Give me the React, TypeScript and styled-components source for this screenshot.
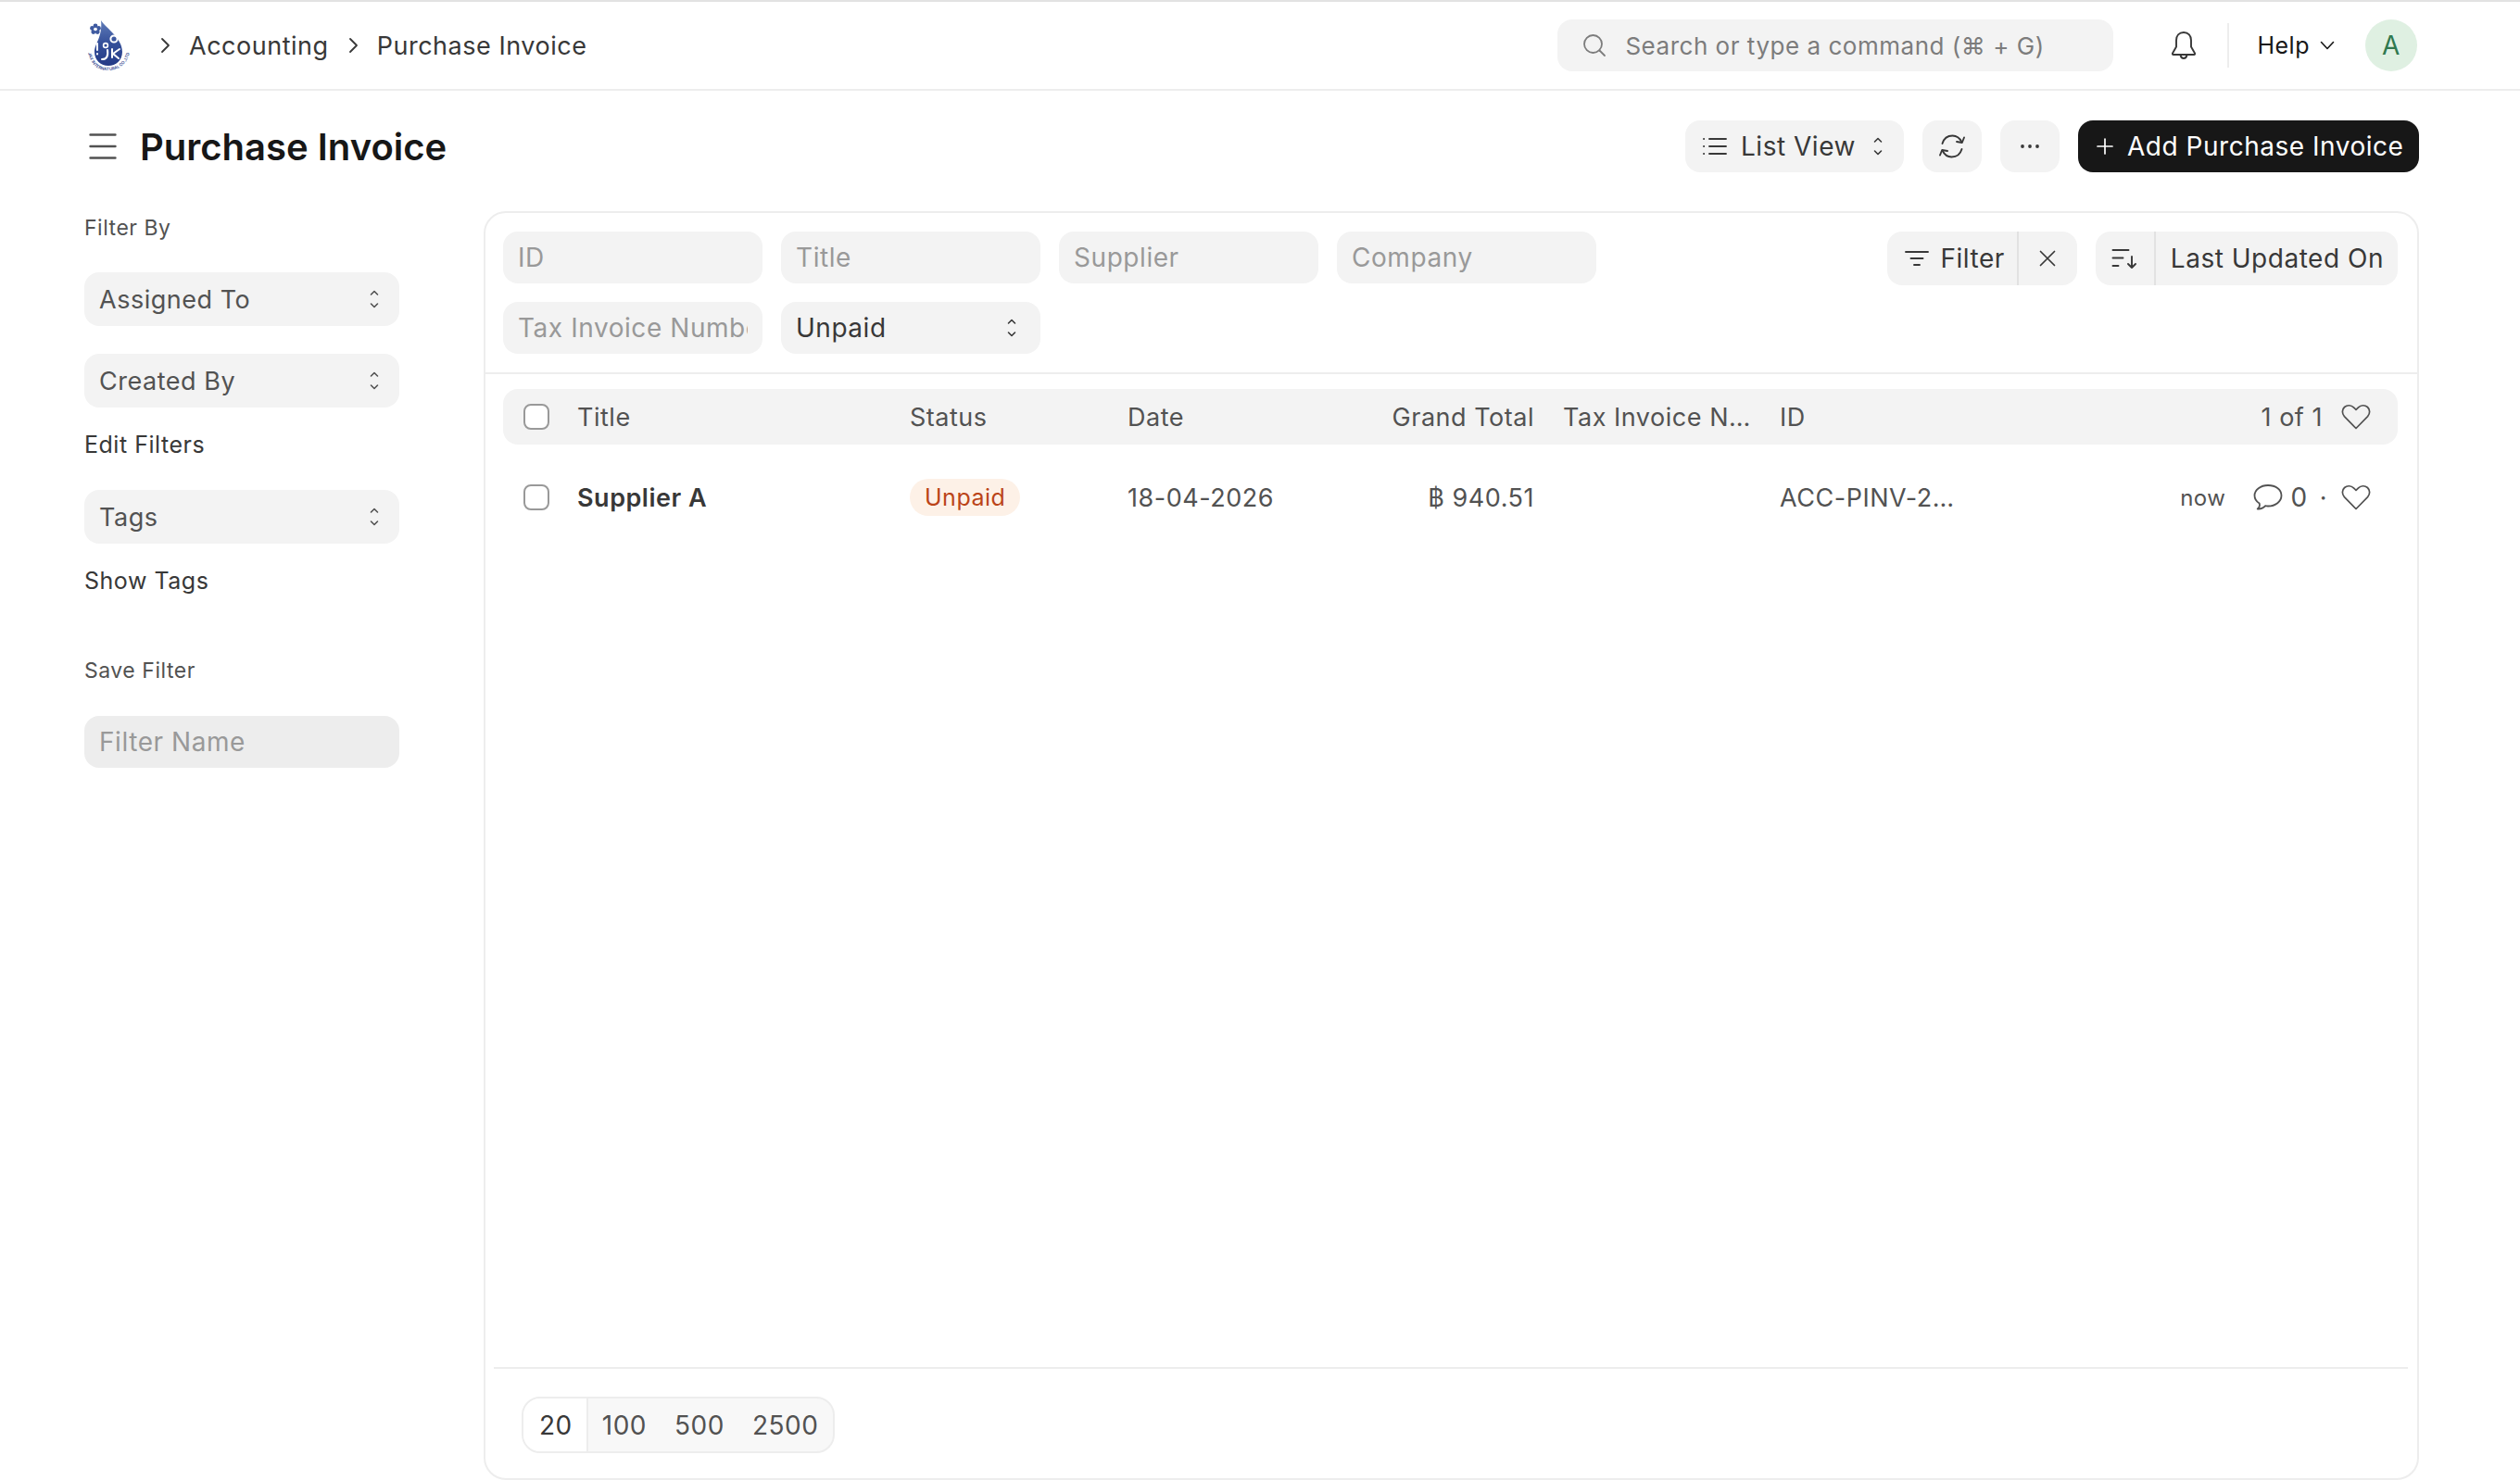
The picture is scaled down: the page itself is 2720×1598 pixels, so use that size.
import styled, { createGlobalStyle } from "styled-components"

const GlobalStyle = createGlobalStyle`
  html, body {
    margin: 0;
    background: #fff;
    font-family: Inter, "Noto Sans", sans-serif;
    font-size: 26px;
    letter-spacing: 0.02em;
    color: #383838;
  }
  * {
    box-sizing: border-box;
  }
`

const Icon = styled.svg`
  display: block;
  flex: none;
  fill: none;
  stroke: currentColor;
  stroke-linecap: round;
  stroke-linejoin: round;
`

function SelectIcon() {
  return (
    <Icon width="10" height="20" viewBox="0 0 10 20" strokeWidth="1.6">
      <path d="M1.5 5 5 1.5 8.5 5M1.5 15 5 18.5 8.5 15" />
    </Icon>
  )
}

function Chevron() {
  return (
    <Icon width="11" height="20" viewBox="0 0 11 20" strokeWidth="1.8">
      <path d="M2 3l7 7-7 7" />
    </Icon>
  )
}

function HeartIcon() {
  return (
    <Icon width="32" height="28" viewBox="0 0 32 28" strokeWidth="1.7">
      <path d="M16 26.5 3.4 13.6C.6 10.6.8 6 3.6 3.500 6.400 1 10.800 1.200 13.400 3.800L16 6.400l2.600-2.600c2.600-2.600 7-2.800 9.800-.3 2.800 2.500 3 7.100.2 10.100L16 26.500Z" />
    </Icon>
  )
}

function Logo() {
  return (
    <LogoSvg width="50" height="58" viewBox="0 0 50 58">
      <defs>
        <linearGradient id="drop" x1="0" y1="0" x2="0" y2="1">
          <stop offset="0" stopColor="#5f7cb8" />
          <stop offset="0.5" stopColor="#35509a" />
          <stop offset="1" stopColor="#243a86" />
        </linearGradient>
        <path id="ring" d="M3 37C7 52 14 56 25 56 36 56 44 50 48 37" />
      </defs>
      <path
        fill="url(#drop)"
        d="M17 2C23 11 40 21 40 36 40 45 33 51 25 51 17 51 10 45 10 36 10 27 19 20 17 2Z"
      />
      <g fill="#3e5aa0">
        <circle cx="11" cy="8" r="2.400" />
        <circle cx="7.500" cy="10.500" r="2.400" />
        <circle cx="14.500" cy="10.500" r="2.400" />
        <circle cx="8.800" cy="14.500" r="2.400" />
        <circle cx="13.200" cy="14.500" r="2.400" />
      </g>
      <circle cx="11" cy="11.500" r="1.800" fill="#fff" />
      <circle cx="31" cy="22" r="3.600" fill="none" stroke="#fff" strokeWidth="2" />
      <circle cx="22" cy="29" r="2.400" fill="none" stroke="#fff" strokeWidth="1.600" />
      <g fill="none" stroke="#fff" strokeWidth="2" strokeLinecap="round">
        <path d="M13 27v7M13 38v.5" />
        <path d="M24 34c1 7-1 10-6 10" />
        <path d="M29 33v9M37 33l-7 5 6 5" />
      </g>
      <LogoText>
        <textPath href="#ring" startOffset="0">JAX INTERNATURAL CO.,LTD</textPath>
      </LogoText>
    </LogoSvg>
  )
}

export default function App() {
  return (
    <Page>
      <GlobalStyle />
      <Navbar>
        <Logo />
        <Crumbs>
          <Chevron />
          <Crumb>Accounting</Crumb>
          <Chevron />
          <Crumb>Purchase Invoice</Crumb>
        </Crumbs>
        <SearchBox>
          <Icon width="26" height="26" viewBox="0 0 26 26" strokeWidth="1.800">
            <circle cx="11.500" cy="11.500" r="9.500" />
            <path d="M18.500 18.500 24 24" />
          </Icon>
          Search or type a command (⌘ + G)
        </SearchBox>
        <BellButton>
          <Icon width="30" height="32" viewBox="0 0 30 32" strokeWidth="1.900">
            <path d="M15 2c-5 0-8 3.500-8 8.500v7L3 24.500c-.4.700 0 1.500.9 1.500h22.200c.9 0 1.300-.8.900-1.500l-4-7v-7C23 5.500 20 2 15 2Z" />
            <path d="M11.500 26.500c.4 2.200 1.700 3.500 3.500 3.500s3.100-1.300 3.500-3.500" />
          </Icon>
        </BellButton>
        <NavDivider />
        <HelpMenu>
          Help
          <Icon width="16" height="10" viewBox="0 0 16 10" strokeWidth="1.600">
            <path d="M1.500 1.500 8 8.500l6.500-7" />
          </Icon>
        </HelpMenu>
        <Avatar>A</Avatar>
      </Navbar>

      <Main>
        <PageHead>
          <Icon width="30" height="28" viewBox="0 0 30 28" strokeWidth="2.400">
            <path d="M1.500 1.500h27M1.500 14h27M1.500 26.500h27" />
          </Icon>
          <PageTitle>Purchase Invoice</PageTitle>
          <HeadActions>
            <ViewButton>
              <Icon width="26" height="20" viewBox="0 0 26 20" strokeWidth="1.900">
                <path d="M7 2h18M7 10h18M7 18h18M1 2h.2M1 10h.2M1 18h.2" />
              </Icon>
              <span>List View</span>
              <SelectIcon />
            </ViewButton>
            <IconButton>
              <Icon width="30" height="28" viewBox="0 0 30 28" strokeWidth="1.900">
                <path d="M4.500 11C6 6 10 2.500 15.500 2.500c5 0 8 3 10 7" />
                <path d="M28 4.500 25.800 10l-5.800-1" />
                <path d="M25.500 17c-1.500 5-5.500 8.500-11 8.500-5 0-8-3-10-7" />
                <path d="M2 23.500l2.200-5.500 5.800 1" />
              </Icon>
            </IconButton>
            <IconButton>
              <Icon width="22" height="6" viewBox="0 0 22 6" strokeWidth="0">
                <circle cx="3" cy="3" r="1.900" fill="currentColor" />
                <circle cx="11" cy="3" r="1.900" fill="currentColor" />
                <circle cx="19" cy="3" r="1.900" fill="currentColor" />
              </Icon>
            </IconButton>
            <PrimaryButton>
              <Icon width="18" height="18" viewBox="0 0 18 18" strokeWidth="1.700">
                <path d="M9 1v16M1 9h16" />
              </Icon>
              Add Purchase Invoice
            </PrimaryButton>
          </HeadActions>
        </PageHead>

        <Body>
          <Sidebar>
            <SideLabel>Filter By</SideLabel>
            <SideSelect $gap>
              Assigned To
              <SelectIcon />
            </SideSelect>
            <SideSelect $gap>
              Created By
              <SelectIcon />
            </SideSelect>
            <SideLink>Edit Filters</SideLink>
            <SideSelect>
              Tags
              <SelectIcon />
            </SideSelect>
            <SideLink>Show Tags</SideLink>
            <SaveLabel>Save Filter</SaveLabel>
            <FilterName placeholder="Filter Name" readOnly />
          </Sidebar>

          <ListCard>
            <FilterBar>
              <FilterFields>
                <FieldInput placeholder="ID" readOnly />
                <FieldInput placeholder="Title" readOnly />
                <FieldInput placeholder="Supplier" readOnly />
                <FieldInput placeholder="Company" readOnly />
                <FieldInput placeholder="Tax Invoice Number" readOnly />
                <FieldSelect>
                  Unpaid
                  <SelectIcon />
                </FieldSelect>
              </FilterFields>
              <FilterActions>
                <ButtonGroup>
                  <GroupPart>
                    <Icon width="26" height="18" viewBox="0 0 26 18" strokeWidth="1.900">
                      <path d="M1 2h24M6.500 9h13M10 16h6" />
                    </Icon>
                    Filter
                  </GroupPart>
                  <GroupPart $square>
                    <Icon width="18" height="18" viewBox="0 0 18 18" strokeWidth="1.700">
                      <path d="M1.500 1.500l15 15M16.500 1.500l-15 15" />
                    </Icon>
                  </GroupPart>
                </ButtonGroup>
                <ButtonGroup>
                  <GroupPart $sort>
                    <Icon width="28" height="22" viewBox="0 0 28 22" strokeWidth="1.900">
                      <path d="M1.500 2h17M1.500 10.500h11M1.500 19h6M22 9v12M18 17l4 4 4-4" />
                    </Icon>
                  </GroupPart>
                  <GroupPart $label>Last Updated On</GroupPart>
                </ButtonGroup>
              </FilterActions>
            </FilterBar>

            <TableWrap>
              <HeadRow>
                <Checkbox />
                <span>Title</span>
                <span>Status</span>
                <span>Date</span>
                <TotalCell>Grand Total</TotalCell>
                <TaxCell>Tax Invoice N…</TaxCell>
                <span>ID</span>
                <MetaCell>
                  <PageCount>1 of 1</PageCount>
                  <HeartIcon />
                </MetaCell>
              </HeadRow>
              <DataRow>
                <Checkbox />
                <SupplierName>Supplier A</SupplierName>
                <span>
                  <StatusPill>Unpaid</StatusPill>
                </span>
                <span>18-04-2026</span>
                <TotalCell>฿ 940.51</TotalCell>
                <TaxCell />
                <span>ACC-PINV-2…</span>
                <MetaCell>
                  <TimeAgo>now</TimeAgo>
                  <Icon width="32" height="30" viewBox="0 0 32 30" strokeWidth="1.800">
                    <path d="M16 2C8 2 1.500 6.800 1.500 13c0 3.600 2 6.500 5.200 8.500.6 2-.2 4.500-2 6 3 .2 6.500-1 8.500-3.300 1 .2 1.800.3 2.800.3 8 0 14.500-5 14.500-11.500S24 2 16 2Z" />
                  </Icon>
                  <CommentCount>0</CommentCount>
                  <MetaDot>·</MetaDot>
                  <HeartIcon />
                </MetaCell>
              </DataRow>
            </TableWrap>

            <ListFooter>
              <PageSizes>
                <PageSize $active>20</PageSize>
                <PageSize>100</PageSize>
                <PageSize>500</PageSize>
                <PageSize>2500</PageSize>
              </PageSizes>
            </ListFooter>
          </ListCard>
        </Body>
      </Main>
    </Page>
  )
}

const Page = styled.div`
  height: 1598px;
  overflow: hidden;
  border-top: 2px solid #e2e2e2;
  display: flex;
  flex-direction: column;
`

const Navbar = styled.header`
  height: 96px;
  flex: none;
  display: flex;
  align-items: center;
  padding: 0 111px 0 92px;
  border-bottom: 2px solid #ededed;
`

const LogoSvg = styled.svg`
  display: block;
  flex: none;
`

const LogoText = styled.text`
  font-size: 4.500px;
  font-weight: 600;
  letter-spacing: 0;
  fill: #33498f;
`

const Crumbs = styled.nav`
  display: flex;
  align-items: center;
  margin-left: 31px;
  color: #383838;
  font-size: 27px;
  svg:nth-child(3) {
    margin-left: 21px;
  }
`

const Crumb = styled.span`
  margin-left: 20px;
`

const SearchBox = styled.div`
  width: 600px;
  height: 56px;
  margin-left: auto;
  display: flex;
  align-items: center;
  gap: 20px;
  padding-left: 27px;
  border-radius: 16px;
  background: #f3f3f3;
  color: #7c7c7c;
  font-size: 26px;
`

const BellButton = styled.div`
  margin-left: 61px;
  color: #383838;
`

const NavDivider = styled.div`
  width: 2px;
  height: 48px;
  margin-left: 32px;
  background: #ededed;
`

const HelpMenu = styled.div`
  margin-left: 30px;
  display: flex;
  align-items: center;
  gap: 11px;
  color: #171717;
  font-size: 25px;
`

const Avatar = styled.div`
  width: 56px;
  height: 56px;
  margin-left: 33px;
  display: flex;
  align-items: center;
  justify-content: center;
  border-radius: 50%;
  background: #dff0e2;
  color: #30794f;
  font-size: 28px;
`

const Main = styled.main`
  flex: 1;
  min-height: 0;
  display: flex;
  flex-direction: column;
  padding: 0 109px 0 91px;
`

const PageHead = styled.div`
  flex: none;
  display: flex;
  align-items: center;
  height: 56px;
  margin: 32px 0 42px;
  padding-left: 5px;
  color: #525252;
`

const PageTitle = styled.h1`
  margin: 0 0 0 25px;
  color: #171717;
  font-size: 40px;
  font-weight: 600;
  letter-spacing: 0;
`

const HeadActions = styled.div`
  margin-left: auto;
  display: flex;
  gap: 20px;
`

const ViewButton = styled.div`
  width: 236px;
  height: 56px;
  display: flex;
  align-items: center;
  padding-left: 19px;
  border-radius: 16px;
  background: #f3f3f3;
  color: #383838;
  font-size: 28px;
  span {
    margin: 0 19px 0 15px;
  }
`

const IconButton = styled.div`
  width: 64px;
  height: 56px;
  display: flex;
  align-items: center;
  justify-content: center;
  border-radius: 16px;
  background: #f3f3f3;
  color: #383838;
`

const PrimaryButton = styled.div`
  width: 368px;
  height: 56px;
  display: flex;
  align-items: center;
  gap: 15px;
  padding-left: 20px;
  border-radius: 16px;
  background: #171717;
  color: #fff;
  font-size: 28px;
`

const Body = styled.div`
  flex: 1;
  min-height: 0;
  display: flex;
`

const Sidebar = styled.aside`
  width: 340px;
  flex: none;
  margin-right: 91px;
  display: flex;
  flex-direction: column;
`

const SideLabel = styled.div`
  height: 36px;
  line-height: 36px;
  font-size: 23px;
  color: #525252;
`

const SideSelect = styled.div<{ $gap?: boolean }>`
  height: 58px;
  margin-top: ${props => (props.$gap ? "30px" : "29px")};
  display: flex;
  align-items: center;
  justify-content: space-between;
  padding: 0 22px 0 16px;
  border-radius: 16px;
  background: #f3f3f3;
  color: #525252;
  font-size: 27px;
`

const SideLink = styled.div`
  height: 36px;
  line-height: 36px;
  margin: 22px 0 2px;
  color: #383838;
  font-size: 25px;
`

const SaveLabel = styled(SideLabel)`
  margin-top: 59px;
`

const FilterName = styled.input`
  height: 56px;
  margin-top: 31px;
  width: 100%;
  padding: 0 16px;
  border: 0;
  outline: 0;
  border-radius: 16px;
  background: #ededed;
  font: inherit;
  font-size: 28px;
  letter-spacing: 0.02em;
  &::placeholder {
    color: #999;
  }
`

const ListCard = styled.section`
  flex: 1;
  min-width: 0;
  height: 1370px;
  display: flex;
  flex-direction: column;
  border: 2px solid #ededed;
  border-radius: 24px;
`

const FilterBar = styled.div`
  flex: none;
  display: flex;
  justify-content: space-between;
  align-items: flex-start;
  padding: 20px 21px 20px 19px;
  border-bottom: 2px solid #ededed;
`

const FilterFields = styled.div`
  display: grid;
  grid-template-columns: repeat(4, 280px);
  gap: 20px;
`

const FieldInput = styled.input`
  height: 56px;
  width: 100%;
  padding: 0 16px;
  border: 0;
  outline: 0;
  border-radius: 16px;
  background: #f3f3f3;
  font: inherit;
  font-size: 28px;
  letter-spacing: 0.02em;
  &::placeholder {
    color: #999;
  }
`

const FieldSelect = styled.div`
  height: 56px;
  display: flex;
  align-items: center;
  justify-content: space-between;
  padding: 0 26px 0 16px;
  border-radius: 16px;
  background: #f3f3f3;
  color: #383838;
  font-size: 28px;
`

const FilterActions = styled.div`
  display: flex;
  gap: 20px;
`

const ButtonGroup = styled.div`
  height: 58px;
  display: flex;
  border-radius: 16px;
  background: #f3f3f3;
  color: #383838;
  font-size: 28px;
`

const GroupPart = styled.div<{ $square?: boolean; $sort?: boolean; $label?: boolean }>`
  height: 100%;
  display: flex;
  align-items: center;
  justify-content: center;
  gap: 12px;
  padding: 0 13px 0 19px;
  ${props => props.$square && "width: 65px; padding: 0;"}
  ${props => props.$sort && "width: 63px; padding: 0;"}
  ${props => props.$label && "padding: 0 15px 0 16px;"}
  & + & {
    border-left: 2px solid #e2e2e2;
  }
`

const TableWrap = styled.div`
  flex: none;
  padding: 16px 21px 0 19px;
`

const HeadRow = styled.div`
  height: 60px;
  display: grid;
  grid-template-columns: 58px 359px 235px 251px 188px 265px 301px 1fr;
  align-items: center;
  padding: 0 29px 0 22px;
  border-radius: 16px;
  background: #f3f3f3;
  color: #525252;
  font-size: 27px;
`

const DataRow = styled(HeadRow)`
  height: 114px;
  border-radius: 0;
  background: none;
`

const Checkbox = styled.div`
  width: 28px;
  height: 28px;
  border: 2px solid #999;
  border-radius: 8px;
  background: #fff;
`

const TotalCell = styled.span`
  text-align: right;
`

const TaxCell = styled.span`
  padding-left: 31px;
`

const MetaCell = styled.div`
  display: flex;
  align-items: center;
  justify-content: flex-end;
`

const PageCount = styled.span`
  margin-right: 20px;
`

const SupplierName = styled.span`
  color: #383838;
  font-weight: 600;
`

const StatusPill = styled.span`
  display: inline-flex;
  align-items: center;
  height: 40px;
  padding: 0 16px;
  border-radius: 20px;
  background: #fdf1e7;
  color: #bb4418;
  font-size: 25px;
`

const TimeAgo = styled.span`
  margin-right: 29px;
  font-size: 24px;
`

const CommentCount = styled.span`
  margin-left: 9px;
  font-size: 28px;
`

const MetaDot = styled.span`
  margin: 0 15px 0 13px;
`

const ListFooter = styled.div`
  flex: none;
  margin: auto 10px 0 9px;
  padding: 30px 0 27px 30px;
  border-top: 2px solid #ededed;
`

const PageSizes = styled.div`
  display: inline-flex;
  height: 61px;
  border: 2px solid #ededed;
  border-radius: 20px;
  background: #f8f8f8;
  overflow: hidden;
  font-size: 28px;
`

const PageSize = styled.div<{ $active?: boolean }>`
  display: flex;
  align-items: center;
  padding: ${props => (props.$active ? "0 15px 0 17px" : "0 15px")};
  ${props => props.$active && "background: #fff; border-right: 2px solid #ededed;"}
  color: ${props => (props.$active ? "#383838" : "#525252")};
`
